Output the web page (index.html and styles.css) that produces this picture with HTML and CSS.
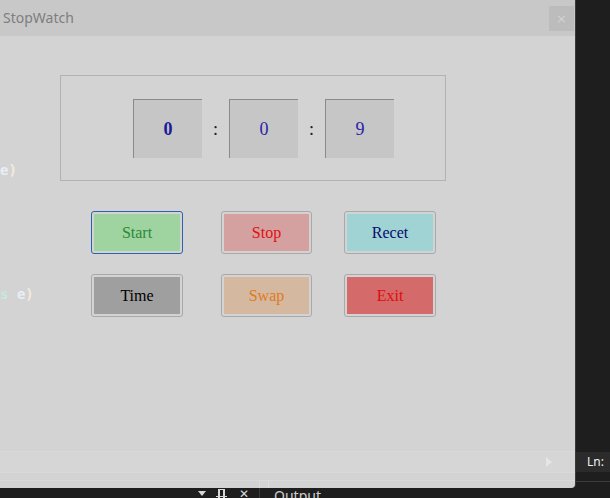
FILE: index.html
```html
<!DOCTYPE html>
<html>
<head>
<meta charset="utf-8">
<link rel="stylesheet" href="styles.css">
</head>
<body>
<div class="ide">
  <div class="top">
    <div class="window">
      <div class="titlebar">
        <span class="title">StopWatch</span>
        <span class="close">×</span>
      </div>
      <div class="content">
        <div class="group">
          <div class="digit bold">0</div>
          <div class="colon">:</div>
          <div class="digit">0</div>
          <div class="colon">:</div>
          <div class="digit">9</div>
        </div>
        <div class="btnrow">
          <div class="btn b1 focused"><span class="fill start">Start</span></div>
          <div class="btn b2"><span class="fill stop">Stop</span></div>
          <div class="btn b3"><span class="fill recet">Recet</span></div>
        </div>
        <div class="btnrow row2">
          <div class="btn b1"><span class="fill time">Time</span></div>
          <div class="btn b2"><span class="fill swap">Swap</span></div>
          <div class="btn b3"><span class="fill exit">Exit</span></div>
        </div>
      </div>
      <div class="ghost-status"><span class="ghost-arrow"></span></div>
      <div class="ghost-gap"></div>
      <div class="ghost-tabs"><span class="vl l1"></span><span class="vl l2"></span></div>
      <div class="ghost g1"><span class="ge">e</span><span class="gp">)</span></div>
      <div class="ghost g2"><span class="gs">s</span> <span class="ge">e</span><span class="gp">)</span></div>
    </div>
    <div class="side">
      <div class="side-status">Ln:</div>
      <div class="side-line"></div>
    </div>
  </div>
  <div class="bottom">
    <span class="ico tri"></span>
    <span class="ico pin"><span class="pin-base"></span></span>
    <span class="ico x">✕</span>
    <span class="sep"></span>
    <span class="out">Output</span>
  </div>
</div>
</body>
</html>
```

FILE: styles.css
```css
html, body {
  margin: 0;
  padding: 0;
  background: #1e1e1e;
}
.ide {
  width: 610px;
  height: 498px;
  overflow: hidden;
  background: #1e1e1e;
  display: flex;
  flex-direction: column;
}
.top {
  display: flex;
  height: 488px;
}
.window {
  position: relative;
  width: 575px;
  height: 488px;
  background: #d3d3d3;
  border-bottom-right-radius: 4px;
  box-shadow: 1px 0 0 #3a3a3a;
  display: flex;
  flex-direction: column;
  overflow: hidden;
}
.titlebar {
  height: 36px;
  flex: none;
  background: #c8c8c8;
  display: flex;
  align-items: center;
  padding-left: 3px;
}
.title {
  font-family: "Noto Sans", sans-serif;
  font-size: 14px;
  color: #7e7e7e;
  margin-top: -1px;
}
.close {
  margin-left: auto;
  margin-right: 1px;
  width: 25px;
  height: 25px;
  background: #bcbcbc;
  color: #d2d2d2;
  font-family: "DejaVu Sans", sans-serif;
  font-size: 13px;
  display: flex;
  align-items: center;
  justify-content: center;
}
.content {
  padding-top: 39px;
  padding-left: 60px;
}
.group {
  width: 384px;
  height: 104px;
  border: 1px solid #b2b2b2;
  box-sizing: content-box;
  padding: 0;
  display: flex;
  align-items: flex-start;
}
.group > :first-child {
  margin-left: 72px;
}
.digit {
  margin-top: 23px;
  width: 68px;
  height: 58px;
  background: #c6c6c6;
  border-top: 1px solid #8a8a8a;
  border-left: 1px solid #8a8a8a;
  display: flex;
  align-items: center;
  justify-content: center;
  font-family: "Liberation Serif", serif;
  font-size: 18px;
  color: #2a22a8;
}
.digit.bold {
  font-weight: bold;
  color: #1a1a98;
}
.colon {
  width: 27px;
  margin-top: 23px;
  height: 59px;
  display: flex;
  align-items: center;
  justify-content: center;
  font-family: "Liberation Serif", serif;
  font-size: 18px;
  color: #222;
  padding-top: 2px;
  box-sizing: border-box;
}
.btnrow {
  display: flex;
  margin-top: 30px;
  padding-left: 31px;
}
.btnrow.row2 {
  margin-top: 20px;
}
.btn {
  width: 92px;
  height: 43px;
  box-sizing: border-box;
  border: 1px solid #a9a9a9;
  border-radius: 3px;
  padding: 1px;
  display: flex;
}
.b2 { margin-left: 38px; width: 91px; }
.b3 { margin-left: 32px; width: 92px; }
.btn.focused {
  border-color: #2a62b0;
}
.fill {
  flex: 1;
  display: flex;
  align-items: center;
  justify-content: center;
  font-family: "Liberation Serif", serif;
  font-size: 16px;
  margin: 1px;
}
.start { background: #9fd39f; color: #2b8a3a; }
.stop  { background: #d4a0a0; color: #e01010; }
.recet { background: #a0d3d3; color: #0a0a70; }
.time  { background: #9f9f9f; color: #000; }
.swap  { background: #d4b8a0; color: #e27a20; }
.exit  { background: #d46a6a; color: #e00c0c; }

.ghost-status {
  margin-top: auto;
  height: 20px;
  border-top: 1px solid #d9d9d9;
  border-bottom: 1px solid #dadada;
  background: #d6d6d6;
  position: relative;
}
.ghost-arrow {
  position: absolute;
  left: 546px;
  top: 5px;
  width: 0;
  height: 0;
  border-top: 5px solid transparent;
  border-bottom: 5px solid transparent;
  border-left: 6px solid #e6e6e6;
}
.ghost-gap {
  height: 7px;
}
.ghost-tabs {
  height: 7px;
  border-top: 1px solid #dadada;
  position: relative;
}
.vl {
  position: absolute;
  top: 0;
  width: 1px;
  height: 7px;
  background: #dcdcdc;
}
.l1 { left: 259px; }
.l2 { left: 268px; }

.ghost {
  position: absolute;
  left: 0;
  font-family: "DejaVu Sans Mono", monospace;
  font-weight: bold;
  font-size: 14px;
  line-height: 16px;
  white-space: pre;
}
.g1 { top: 162px; }
.g2 { top: 286px; }
.ge { color: #e8eef6; }
.gp { color: #f2ecdc; }
.gs { color: #c8e6df; }

.side {
  width: 35px;
  display: flex;
  flex-direction: column;
}
.side-status {
  margin-top: 452px;
  height: 20px;
  background: #2b2b2b;
  color: #f0f0f0;
  font-family: "Noto Sans", sans-serif;
  font-size: 12px;
  line-height: 20px;
  padding-left: 12px;
}
.side-line {
  margin-top: 9px;
  height: 1px;
  background: #3c3c3c;
}
.bottom {
  height: 10px;
  position: relative;
  background: #1e1e1e;
}
.ico {
  position: absolute;
  color: #d8d8d8;
  font-family: "DejaVu Sans", sans-serif;
}
.tri {
  left: 198px;
  top: 3px;
  width: 0;
  height: 0;
  border-left: 4px solid transparent;
  border-right: 4px solid transparent;
  border-top: 5px solid #d8d8d8;
}
.pin {
  left: 218px;
  top: 1px;
  width: 7px;
  height: 9px;
  border-left: 2px solid #d8d8d8;
  border-right: 2px solid #d8d8d8;
  border-top: 1px solid #d8d8d8;
  box-sizing: border-box;
}
.pin-base {
  position: absolute;
  left: -4px;
  right: -4px;
  bottom: 1px;
  height: 1px;
  background: #d8d8d8;
}
.x {
  left: 239px;
  top: 0;
  font-size: 12px;
  line-height: 12px;
}
.sep {
  position: absolute;
  left: 259px;
  top: 0;
  width: 1px;
  height: 10px;
  background: #3a3a3a;
}
.out {
  position: absolute;
  left: 274px;
  top: 0;
  font-family: "Noto Sans", sans-serif;
  font-size: 14px;
  line-height: 16px;
  color: #cfcfcf;
}
```
